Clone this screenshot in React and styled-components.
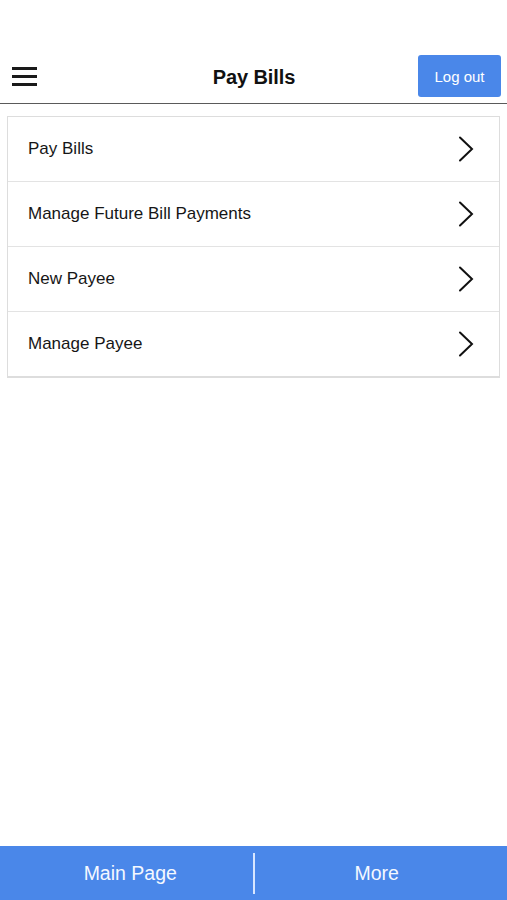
import React from "react";
import styled, { createGlobalStyle } from "styled-components";

const GlobalStyle = createGlobalStyle`
  html, body {
    margin: 0;
    padding: 0;
    background: #ffffff;
    font-family: "Liberation Sans", Arial, sans-serif;
    color: #111111;
  }
  #root {
    height: 900px;
  }
`;

const Screen = styled.div`
  display: flex;
  flex-direction: column;
  height: 900px;
  width: 507px;
  background: #ffffff;
`;

const Header = styled.header`
  display: grid;
  grid-template-columns: 1fr auto 1fr;
  align-items: center;
  height: 104px;
  padding: 55px 6px 6px 12px;
  box-sizing: border-box;
  border-bottom: 1.5px solid #5a5a5a;
`;

const MenuButton = styled.button`
  justify-self: start;
  display: flex;
  flex-direction: column;
  gap: 5px;
  width: 25px;
  padding: 0;
  border: none;
  background: none;
`;

const MenuLine = styled.span`
  display: block;
  height: 3px;
  background: #1a1a1a;
`;

const Title = styled.h1`
  margin: 3px 5px 0 0;
  font-size: 20px;
  font-weight: 700;
  letter-spacing: -0.1px;
  color: #111111;
`;

const LogoutButton = styled.button`
  justify-self: end;
  width: 83px;
  height: 42px;
  border: none;
  border-radius: 3px;
  background: #4a87e9;
  color: #ffffff;
  font-family: "Liberation Sans", Arial, sans-serif;
  font-size: 15px;
`;

const Content = styled.main`
  flex: 1;
  padding: 12px 7px 0 7px;
`;

const MenuList = styled.ul`
  list-style: none;
  margin: 0;
  padding: 0;
  border: 1px solid #dddddd;
  border-bottom-width: 2px;
`;

const MenuItem = styled.li`
  display: flex;
  align-items: center;
  justify-content: space-between;
  height: 64px;
  padding: 0 25px 0 20px;
  font-size: 17px;
  color: #161616;
  border-top: ${(p) => (p.$first ? "none" : "1.5px solid #e3e3e3")};
`;

const Chevron = () => (
  <svg width="16" height="26" viewBox="0 0 16 26" fill="none">
    <path d="M2 1.5 L14 13 L2 24.5" stroke="#111" strokeWidth="2" strokeLinecap="round" strokeLinejoin="miter" />
  </svg>
);

const TabBar = styled.nav`
  display: flex;
  align-items: center;
  height: 54px;
  background: #4a87e9;
`;

const Tab = styled.div`
  flex: 1;
  text-align: center;
  color: #f4f8ff;
  font-size: 19.5px;
  padding: ${(p) => (p.$side === "left" ? "0 0 0 8px" : "0 8px 0 0")};
`;

const Divider = styled.span`
  width: 2px;
  height: 41px;
  background: #d8e6ff;
`;

const items = [
  "Pay Bills",
  "Manage Future Bill Payments",
  "New Payee",
  "Manage Payee",
];

export default function App() {
  return (
    <>
      <GlobalStyle />
      <Screen>
        <Header>
          <MenuButton aria-label="menu">
            <MenuLine />
            <MenuLine />
            <MenuLine />
          </MenuButton>
          <Title>Pay Bills</Title>
          <LogoutButton>Log out</LogoutButton>
        </Header>
        <Content>
          <MenuList>
            {items.map((label, i) => (
              <MenuItem key={label} $first={i === 0}>
                <span>{label}</span>
                <Chevron />
              </MenuItem>
            ))}
          </MenuList>
        </Content>
        <TabBar>
          <Tab $side="left">Main Page</Tab>
          <Divider />
          <Tab $side="right">More</Tab>
        </TabBar>
      </Screen>
    </>
  );
}
